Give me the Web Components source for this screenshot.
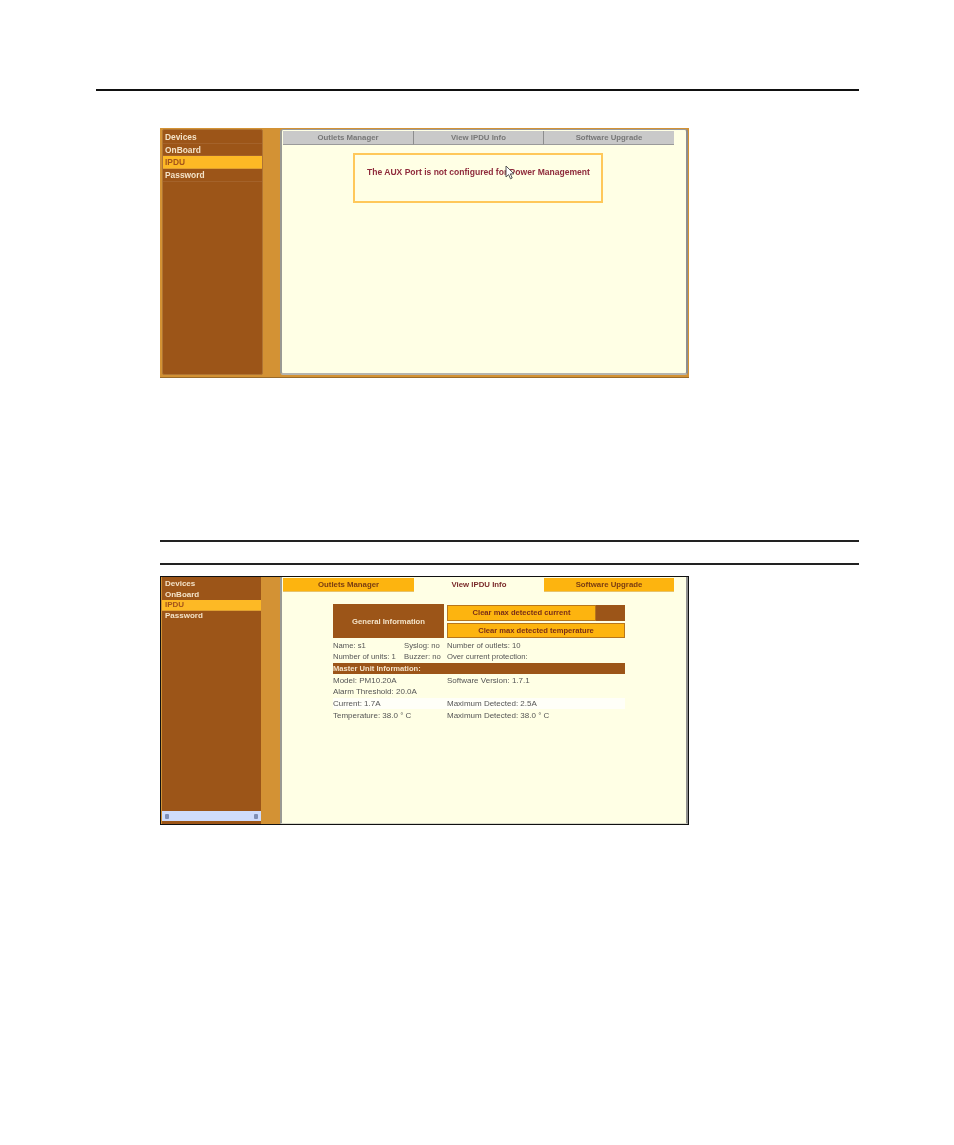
<!DOCTYPE html>
<html>
<head>
<meta charset="utf-8">
<title>IPDU</title>
<style>
  html, body { margin: 0; background: #fff; }
  body { font-family: "Liberation Sans", Arial, sans-serif; }
</style>
</head>
<body>
<doc-page>
  <ipdu-frame id="first" tabstyle="grey">
    <notice-box>The AUX Port is not configured for Power Management</notice-box>
  </ipdu-frame>
  <ipdu-frame id="second" tabstyle="orange" outlined scrollbar>
    <info-table></info-table>
  </ipdu-frame>
</doc-page>

<script>
class DocPage extends HTMLElement {
  constructor() {
    super();
    this.attachShadow({ mode: 'open' }).innerHTML = `
      <style>
        :host { display: block; width: 954px; height: 1145px; padding-top: 89px; box-sizing: border-box; overflow: hidden; }
        .top { height: 2px; margin: 0 95px 0 96px; background: #111; }
        .body { margin: 37px 95px 0 160px; }
        .rule { height: 2px; background: #222; }
        .gap1 { height: 162px; }
        .gap2 { height: 21px; }
        .gap3 { height: 11px; }
      </style>
      <div class="top"></div>
      <div class="body">
        <slot name="a"></slot>
        <div class="gap1"></div>
        <div class="rule"></div>
        <div class="gap2"></div>
        <div class="rule"></div>
        <div class="gap3"></div>
        <slot name="b"></slot>
      </div>`;
  }
  connectedCallback() {
    this.querySelector('#first').slot = 'a';
    this.querySelector('#second').slot = 'b';
  }
}

class SideMenu extends HTMLElement {
  constructor() {
    super();
    this.attachShadow({ mode: 'open' });
  }
  connectedCallback() {
    const compact = this.hasAttribute('compact');
    const items = ['Devices', 'OnBoard', 'IPDU', 'Password'];
    this.shadowRoot.innerHTML = `
      <style>
        :host { display: block; font: bold ${compact ? 8 : 8.4}px "Liberation Sans", Arial, sans-serif; color: #f4e3c8; ${compact ? 'padding-top: 1px;' : ''} }
        .item { height: ${compact ? 10.8 : 12.7}px; line-height: ${compact ? 10.8 : 12.7}px; padding-left: ${compact ? 3 : 2}px; border-bottom: 1px solid ${compact ? '#9c5518' : '#a4622a'}; box-sizing: border-box; white-space: nowrap; }
        .on { background: #fdb925; color: #a3541a; border-bottom-color: #e0a030; ${compact ? 'margin-top: -1px; height: 11.8px;' : ''} }
      </style>
      ${items.map(i => `<div class="item ${i === 'IPDU' ? 'on' : ''}">${i}</div>`).join('')}`;
  }
}

class TabBar extends HTMLElement {
  constructor() {
    super();
    this.attachShadow({ mode: 'open' });
  }
  connectedCallback() {
    const orange = this.getAttribute('tabstyle') === 'orange';
    const tabs = ['Outlets Manager', 'View IPDU Info', 'Software Upgrade'];
    this.shadowRoot.innerHTML = `
      <style>
        :host { display: grid; grid-template-columns: 131px 130px 130px; width: 393px; height: 14px; font: bold 7.8px "Liberation Sans", Arial, sans-serif; }
        .tab { text-align: center; line-height: 13px; box-sizing: border-box; white-space: nowrap; }
        .grey { background: #c9c9c9; color: #777; border-right: 1px solid #8d8d8d; border-bottom: 1px solid #9a9a9a; }
        .grey:last-child { border-right: 0; }
        .orange { background: #fdb40f; color: #7a3d12; border-bottom: 1px solid #e8c36a; }
        .active { background: #ffffe5; color: #7a2a2a; }
      </style>
      ${tabs.map((t, i) => `<div class="tab ${orange ? (i === 1 ? 'active' : 'orange') : 'grey'}">${t}</div>`).join('')}`;
  }
}

class IpduFrame extends HTMLElement {
  constructor() {
    super();
    this.attachShadow({ mode: 'open' });
  }
  connectedCallback() {
    const second = this.hasAttribute('outlined');
    this.shadowRoot.innerHTML = `
      <style>
        :host { display: block; width: 529px; height: ${second ? 249 : 250}px; }
        .frame { position: relative; display: flex; width: 100%; height: 100%; box-sizing: border-box; background: #d39234; filter: blur(0.35px);
                 ${second ? 'border: 1px solid #111; padding: 0 0 0 1px;' : 'padding: 1px 0 2px 2px; border-bottom: 1px solid #9a6a28;'} }
        .side { width: ${second ? 99 : 101}px; flex: none; display: flex; flex-direction: column; background: #9c5518; box-sizing: border-box;
                ${second ? 'padding-top: 1px;' : 'border: 1px solid #b07433; border-radius: 2px; padding-top: 1px;'} }
        .fill { flex: 1; }
        .scroll { height: 10px; margin-bottom: 3px; background: #cfdcfb; display: flex; justify-content: space-between; align-items: center; padding: 0 3px; }
        .scroll i { width: 4px; height: 5px; background: #7f8fb5; border-radius: 1px; }
        .main { width: 408px; flex: none; margin-left: ${second ? 19 : 17}px; background: #ffffe5; border-left: 2px solid #9a9a94; border-right: 2px solid #8f8f8f;
                border-bottom: ${second ? '1px solid #d8d8c8' : '2px solid #b5b5b0'}; box-sizing: border-box; padding: 1px 0 0 0; ${second ? '' : 'border-top: 1px solid #999; border-radius: 3px;'} }
        .tabs { margin-left: 1px; }
      </style>
      <div class="frame">
        <div class="side">
          <side-menu ${second ? 'compact' : ''}></side-menu>
          <div class="fill"></div>
          ${this.hasAttribute('scrollbar') ? '<div class="scroll"><i></i><i></i></div>' : ''}
        </div>
        <div class="main">
          <tab-bar class="tabs" tabstyle="${this.getAttribute('tabstyle')}"></tab-bar>
          <slot></slot>
        </div>
      </div>`;
  }
}

class NoticeBox extends HTMLElement {
  constructor() {
    super();
    this.attachShadow({ mode: 'open' }).innerHTML = `
      <style>
        :host { display: block; position: relative; width: 250px; height: 50px; margin: 8px 0 0 71px; box-sizing: border-box;
                border: 2px solid #ffc85a; padding: 11px 0 0 12px; font: bold 8.55px/13px "Liberation Sans", Arial, sans-serif; color: #8f2b3c; white-space: nowrap; }
        svg { position: absolute; left: 150px; top: 10px; }
      </style>
      <slot></slot>
      <svg width="10" height="15" viewBox="0 0 10 15"><path d="M1 1v11l2.6-2.4 1.9 4.2 1.7-.8-1.9-4.1H9z" fill="#fff" stroke="#555" stroke-width="1"/></svg>`;
  }
}

class InfoTable extends HTMLElement {
  constructor() {
    super();
    this.attachShadow({ mode: 'open' }).innerHTML = `
      <style>
        :host { display: block; width: 292px; margin: 12px 0 0 51px; font: 8px "Liberation Sans", Arial, sans-serif; color: #555; }
        .head { display: grid; grid-template-columns: 111px 181px; height: 34px; background: #9c5518; }
        .title { display: flex; align-items: center; justify-content: center; color: #f4e3c8; font-weight: bold; font-size: 7.7px; }
        .btns { display: flex; flex-direction: column; justify-content: space-between; padding: 1px 0 0 3px; background: #ffffe5; }
        .track { background: #9c5518; height: 15.5px; }
        .btn { height: 100%; background: #fdb40f; border: 1px solid #b8761a; box-sizing: border-box; color: #7a2f18; font-weight: bold; font-size: 7.6px; text-align: center; line-height: 13px; }
        .short { width: 149px; }
        .row { display: grid; grid-template-columns: 71px 43px 1fr; height: 11.5px; line-height: 11.5px; white-space: nowrap; }
        .small { font-size: 7.7px; }
        .wide { grid-template-columns: 114px 1fr; }
        .first { margin-top: 1.5px; }
        .white { background: #fffff8; }
        .bar { height: 11px; line-height: 11px; margin-bottom: 1px; background: #9c5518; color: #f4e3c8; font-weight: bold; font-size: 7.6px; }
        .last { height: 12px; line-height: 13px; }
      </style>
      <div class="head">
        <div class="title">General Information</div>
        <div class="btns">
          <div class="track"><div class="btn short">Clear max detected current</div></div>
          <div class="track"><div class="btn">Clear max detected temperature</div></div>
        </div>
      </div>
      <div class="row first small"><span>Name: s1</span><span>Syslog: no</span><span>Number of outlets: 10</span></div>
      <div class="row small"><span>Number of units: 1</span><span>Buzzer: no</span><span>Over current protection:</span></div>
      <div class="bar">Master Unit Information:</div>
      <div class="row wide"><span>Model: PM10.20A</span><span>Software Version: 1.7.1</span></div>
      <div class="row wide"><span>Alarm Threshold: 20.0A</span><span></span></div>
      <div class="row wide white"><span>Current: 1.7A</span><span>Maximum Detected: 2.5A</span></div>
      <div class="row wide last"><span>Temperature: 38.0 ° C</span><span>Maximum Detected: 38.0 ° C</span></div>`;
  }
}

customElements.define('side-menu', SideMenu);
customElements.define('tab-bar', TabBar);
customElements.define('notice-box', NoticeBox);
customElements.define('info-table', InfoTable);
customElements.define('ipdu-frame', IpduFrame);
customElements.define('doc-page', DocPage);
</script>
</body>
</html>
